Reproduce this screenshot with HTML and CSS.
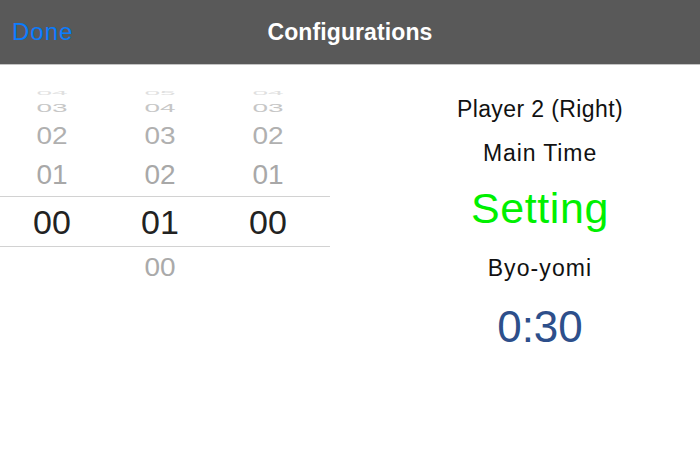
FILE: index.html
```html
<!DOCTYPE html>
<html>
<head>
<meta charset="utf-8">
<link rel="stylesheet" href="styles.css">
</head>
<body>
<div class="screen">
  <header class="navbar">
    <span class="nav-done">Done</span>
    <span class="nav-title">Configurations</span>
  </header>
  <main class="content">
    <section class="picker">
      <div class="row r4"><span>04</span><span>05</span><span>04</span></div>
      <div class="row r3"><span>03</span><span>04</span><span>03</span></div>
      <div class="row r2"><span>02</span><span>03</span><span>02</span></div>
      <div class="row r1"><span>01</span><span>02</span><span>01</span></div>
      <div class="row sel"><span>00</span><span>01</span><span>00</span></div>
      <div class="row rb"><span></span><span>00</span><span></span></div>
    </section>
    <section class="info">
      <div class="label player">Player 2 (Right)</div>
      <div class="label main">Main Time</div>
      <div class="big setting">Setting</div>
      <div class="label byo">Byo-yomi</div>
      <div class="big time">0:30</div>
    </section>
  </main>
</div>
</body>
</html>
```

FILE: styles.css
```css
html, body {
  margin: 0;
  padding: 0;
  background: #ffffff;
}
body {
  font-family: "Liberation Sans", Arial, Helvetica, sans-serif;
}
.screen {
  width: 700px;
  height: 467px;
  overflow: hidden;
  background: #ffffff;
}
.navbar {
  position: relative;
  height: 64px;
  background: #595959;
  border-bottom: 1px solid #c4c4c4;
  display: flex;
  align-items: center;
  justify-content: center;
}
.nav-done {
  position: absolute;
  left: 12px;
  top: 0;
  line-height: 64px;
  font-size: 24px;
  color: #0a7cff;
  letter-spacing: 1px;
}
.nav-title {
  font-size: 23px;
  font-weight: bold;
  color: #ffffff;
  line-height: 64px;
  letter-spacing: 0.1px;
}
.content {
  display: flex;
}
.picker {
  width: 330px;
  margin-top: 23px;
  display: flex;
  flex-direction: column;
}
.row {
  display: grid;
  grid-template-columns: 72px 72px 72px;
  column-gap: 36px;
  padding-left: 16px;
  align-items: center;
}
.row span {
  display: block;
  text-align: center;
  font-size: 28px;
  line-height: 28px;
  color: #a8a8a8;
}
.r4 { height: 10px; }
.r4 span { color: #e0e0e0; line-height: 10px; transform: scaleY(0.18); }
.r3 { height: 20px; }
.r3 span { color: #c6c6c6; line-height: 20px; transform: scaleY(0.42); }
.r2 { height: 35px; }
.r2 span { color: #b0b0b0; transform: scaleY(0.85); }
.r1 { height: 43px; }
.r1 span { color: #a8a8a8; }
.sel {
  height: 49px;
  border-top: 1px solid #d2d2d2;
  border-bottom: 1px solid #d2d2d2;
}
.sel span { color: #222222; font-size: 34px; line-height: 34px; }
.rb { height: 40px; }
.rb span { color: #aaaaaa; transform: scaleY(0.95); }
.info {
  margin-left: 50px;
  flex: 1;
  display: flex;
  flex-direction: column;
  align-items: center;
  padding-top: 29px;
}
.label {
  font-size: 23px;
  line-height: 30px;
  color: #111111;
  letter-spacing: 0.4px;
}
.main { margin-top: 14px; letter-spacing: 0.9px; }
.big {
  font-size: 43px;
  line-height: 50px;
}
.setting {
  margin-top: 15px;
  color: #00f000;
  letter-spacing: 0.6px;
}
.byo { margin-top: 20px; letter-spacing: 1.1px; }
.time {
  margin-top: 19px;
  color: #2d4f8b;
  font-size: 44px;
}
```
